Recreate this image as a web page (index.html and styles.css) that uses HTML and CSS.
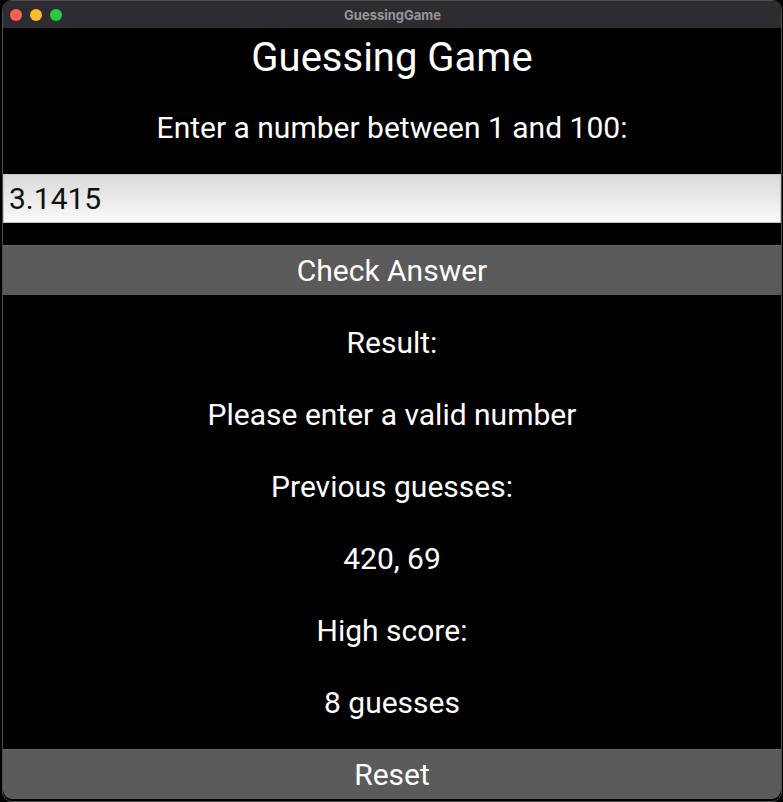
FILE: index.html
```html
<!DOCTYPE html>
<html>
<head>
<meta charset="utf-8">
<link rel="stylesheet" href="styles.css">
</head>
<body>
<div class="window">
  <div class="titlebar">
    <div class="lights">
      <span class="light red"></span>
      <span class="light yellow"></span>
      <span class="light green"></span>
    </div>
    <div class="wtitle">GuessingGame</div>
  </div>
  <div class="content">
    <div class="row title">Guessing Game</div>
    <div class="row label">Enter a number between 1 and 100:</div>
    <input class="field" type="text" value="3.1415">
    <div class="btn">Check Answer</div>
    <div class="row label">Result:</div>
    <div class="row label">Please enter a valid number</div>
    <div class="row label">Previous guesses:</div>
    <div class="row label">420, 69</div>
    <div class="row label">High score:</div>
    <div class="row label">8 guesses</div>
    <div class="btn reset">Reset</div>
  </div>
</div>
</body>
</html>
```

FILE: styles.css
```css
html, body {
  margin: 0;
  padding: 0;
  background: #000;
  width: 783px;
  height: 802px;
  overflow: hidden;
}
.window {
  box-sizing: border-box;
  margin-left: 2px;
  width: 780px;
  height: 802px;
  border: 1px solid #4c4b4e;
  border-radius: 10px;
  overflow: hidden;
  background: #000;
  display: flex;
  flex-direction: column;
}
.titlebar {
  height: 27px;
  flex: none;
  background: #2e2c31;
  position: relative;
  display: flex;
  align-items: center;
  justify-content: center;
}
.lights {
  position: absolute;
  left: 7px;
  top: 8px;
  display: flex;
  gap: 8px;
}
.light {
  width: 12px;
  height: 12px;
  border-radius: 50%;
  display: block;
}
.red { background: #fe5f57; }
.yellow { background: #febc2e; }
.green { background: #28c840; }
.wtitle {
  font-family: "Inter", "Liberation Sans", sans-serif;
  font-weight: 700;
  font-size: 13px;
  color: #97959a;
  margin-left: 1px;
}
.content {
  flex: 1;
  display: flex;
  flex-direction: column;
  gap: 22px;
  font-family: "Roboto", "Liberation Sans", sans-serif;
  color: #fff;
}
.row {
  height: 50px;
  display: flex;
  align-items: center;
  justify-content: center;
  font-size: 30px;
  white-space: nowrap;
}
.row.title {
  box-sizing: border-box;
  height: 52px;
  padding-top: 6px;
  font-size: 40px;
}
.field {
  box-sizing: border-box;
  height: 49px;
  flex: none;
  width: 100%;
  margin: 0;
  border: 1px solid #c4c4c4;
  background: linear-gradient(#dadada, #f9f9f9);
  font-family: "Roboto", "Liberation Sans", sans-serif;
  font-size: 30px;
  color: #111;
  padding: 0 5px;
  outline: none;
}
.btn {
  height: 50px;
  flex: none;
  box-sizing: border-box;
  background: #5a5a5a;
  border-top: 1px solid #666;
  display: flex;
  align-items: center;
  justify-content: center;
  font-size: 30px;
  color: #fff;
}
.btn.reset {
  border-radius: 0 0 9px 9px;
}
```
